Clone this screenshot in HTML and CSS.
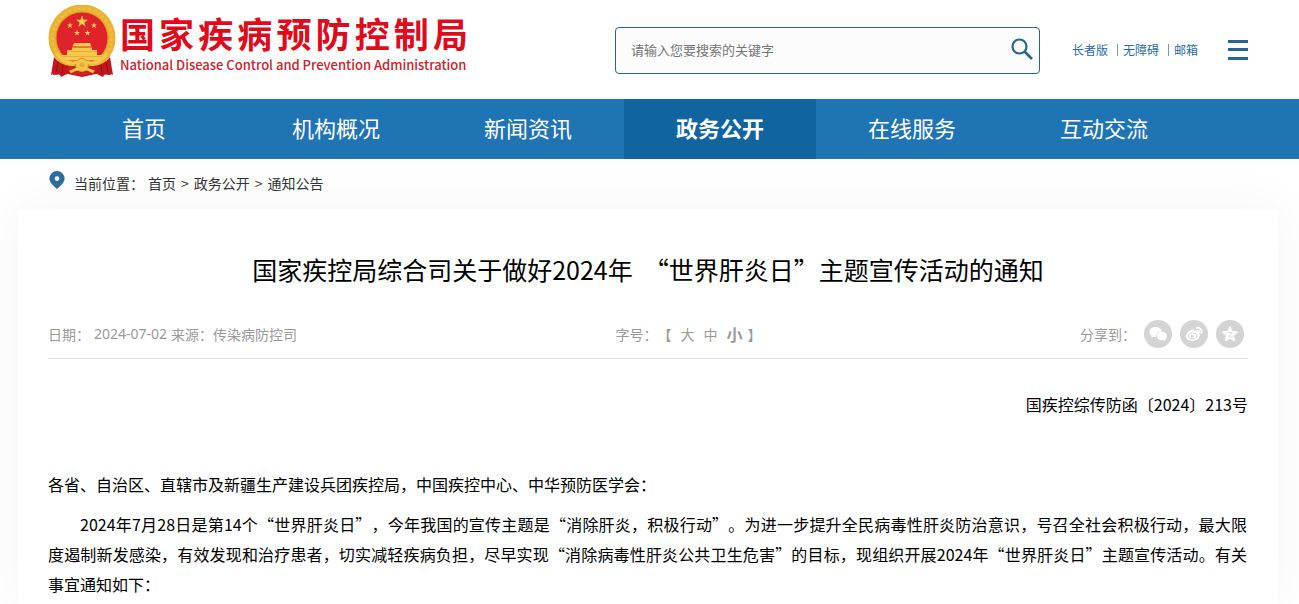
FILE: index.html
```html
<!DOCTYPE html>
<html lang="zh-CN">
<head>
<meta charset="utf-8">
<meta name="viewport" content="width=device-width, initial-scale=1">
<title>国家疾控局综合司关于做好2024年“世界肝炎日”主题宣传活动的通知</title>
<link rel="stylesheet" href="styles.css">
</head>
<body>
<header class="site-header">
  <div class="wrap header-row">
    <a class="brand" href="#">
      <svg class="emblem" viewBox="0 0 68 72" aria-hidden="true">
        <path d="M12 50 L5 70 L20 69 L34 72 L48 69 L63 70 L56 50Z" fill="#c8161d"/>
        <circle cx="34" cy="33" r="33.5" fill="#e9b230"/>
        <circle cx="34" cy="33" r="29.5" fill="none" stroke="#edbc40" stroke-width="3" stroke-dasharray="3 2"/>
        <circle cx="34" cy="33" r="26" fill="#e0222a" stroke="#d79a25" stroke-width="1"/>
        <path d="M34 10.500l1.500 4.200h4.500l-3.600 2.700 1.300 4.300-3.700-2.600-3.700 2.600 1.300-4.300-3.600-2.700h4.500z" fill="#f9cf4d"/>
        <path d="M22 17.500l.8 2h2.200l-1.800 1.300.7 2.200-1.900-1.300-1.900 1.300.7-2.200-1.800-1.300h2.200zM46 17.500l.8 2h2.200l-1.800 1.300.7 2.200-1.900-1.300-1.900 1.300.7-2.200-1.800-1.300h2.200zM29 25l.8 2h2.200l-1.800 1.300.7 2.200-1.900-1.300-1.900 1.300.7-2.200-1.800-1.300h2.200zM39.500 25l.8 2h2.200l-1.800 1.300.7 2.200-1.900-1.300-1.900 1.300.7-2.200-1.800-1.300h2.200z" fill="#f9cf4d"/>
        <path d="M26 38h16l1.500 3.500h-19zM24 42.500h20v2.500h5v5h6.500q-2 3.500-4 5.500h-35q-3-2.500-4-5.500h6.500v-5h5z" fill="#f7c94b"/>
        <path d="M19 46.500h30M13 51.500h42" stroke="#e6ad38" stroke-width="1"/>
        <path d="M6 52 Q12 60 22 61 L21 68 L13 72 L10 67 L3 70Z M62 52 Q56 60 46 61 L47 68 L55 72 L58 67 L65 70Z" fill="#c5161d"/>
        <path d="M10 57l-2 10M15 60l-1 9M58 57l2 10M53 60l1 9" stroke="#8f1118" stroke-width="1"/>
        <path d="M20 66q14 9 28 0l-2-5H22z" fill="#cf2026"/>
        <circle cx="34" cy="60" r="6.500" fill="#f4c647" stroke="#d49225"/>
        <circle cx="34" cy="60" r="2.500" fill="#e6ad38"/>
        <path d="M9 49q10 12 20 8M59 49q-10 12-20 8M22 67q12-7 24 0" fill="none" stroke="#f4c647" stroke-width="3"/>
      </svg>
      <span class="brand-text">
        <span class="brand-cn">国家疾病预防控制局</span>
        <span class="brand-en">National Disease Control and Prevention Administration</span>
      </span>
    </a>
    <form class="search" role="search">
      <input class="search-input" type="text" aria-label="搜索" placeholder="请输入您要搜索的关键字">
      <button class="search-btn" type="button" aria-label="搜索">
        <svg viewBox="0 0 22 22" aria-hidden="true"><circle cx="8.500" cy="8.500" r="7" fill="none" stroke="currentColor" stroke-width="2.200"/><path d="M13.500 13.500L21 21" stroke="currentColor" stroke-width="2.600"/></svg>
      </button>
    </form>
    <nav class="tools" aria-label="辅助">
      <a href="#">长者版</a>
      <a href="#">无障碍</a>
      <a href="#">邮箱</a>
    </nav>
    <button class="menu-btn" type="button" aria-label="菜单"><span></span><span></span><span></span></button>
  </div>
</header>
<nav class="main-nav" aria-label="主导航">
  <div class="wrap nav-row">
    <a href="#">首页</a>
    <a href="#">机构概况</a>
    <a href="#">新闻资讯</a>
    <a class="active" href="#">政务公开</a>
    <a href="#">在线服务</a>
    <a href="#">互动交流</a>
  </div>
</nav>
<div class="wrap crumbs">
  <svg class="pin" viewBox="0 0 16 18" aria-hidden="true"><path fill="#286ca0" fill-rule="evenodd" d="M8 0a7.600 7.600 0 0 1 7.600 7.600c0 4-4 7-7.600 10.400C4.400 14.600.4 11.600.4 7.600A7.600 7.600 0 0 1 8 0zm0 5.200a2.400 2.400 0 1 0 0 4.800 2.400 2.400 0 0 0 0-4.800z"/></svg>
  <span class="crumb-label">当前位置：</span>
  <div class="crumb-path"><a href="#">首页</a><span>&gt;</span><a href="#">政务公开</a><span>&gt;</span><a href="#">通知公告</a></div>
</div>
<div class="page">
<main class="card">
  <h1 class="title">国家疾控局综合司关于做好2024年&nbsp; “世界肝炎日”主题宣传活动的通知</h1>
  <div class="meta">
    <div class="meta-date"><span>日期：</span><span class="date">2024-07-02</span><span>来源：传染病防控司</span></div>
    <div class="meta-size"><span>字号：</span><span>【</span><button type="button">大</button><button type="button">中</button><button class="current" type="button">小</button><span>】</span></div>
    <div class="meta-share">
      <span class="share-label">分享到：</span>
      <a href="#" aria-label="微信"><svg viewBox="0 0 28 28" aria-hidden="true"><circle cx="14" cy="14" r="14" fill="#d4d4d4"/><path fill="#fff" d="M11.500 7C8 7 5.500 9.200 5.500 12c0 1.600.8 2.900 2.100 3.800L7 18l2.500-1.300 2.600.3c-.3-3.400 2.400-5.800 5.900-5.800C17.400 8.700 14.700 7 11.500 7z"/><path fill="#fff" d="M17.800 11.800c-2.900 0-5 1.900-5 4.300s2.100 4.300 5 4.300l1.800-.3 2.100 1.200-.5-1.900c1.100-.8 1.700-1.900 1.700-3.300 0-2.400-2.300-4.300-5.100-4.300z"/></svg></a>
      <a href="#" aria-label="微博"><svg viewBox="0 0 28 28" aria-hidden="true"><circle cx="14" cy="14" r="14" fill="#d4d4d4"/><path fill="#fff" d="M12.500 9.200c1.300-.3 1.900.5 1.500 2 2-.8 4.200-.7 3.900 1.500 1.700.6 2.300 1.600 1.900 3.200-.7 3-4.200 4.900-7.900 4.900-3.500 0-6-1.700-6-4.200 0-3 3.700-6.800 6.600-7.400z"/><ellipse cx="12.500" cy="16" rx="4.200" ry="2.900" fill="none" stroke="#d4d4d4"/><circle cx="12" cy="16.200" r="1.500" fill="#d4d4d4"/><path fill="none" stroke="#fff" stroke-width="1.700" stroke-linecap="round" d="M16.500 7.800c3.300-.8 6 2 4.900 5.300M17 10.500c1.400-.3 2.400.8 2 2"/></svg></a>
      <a href="#" aria-label="QQ空间"><svg viewBox="0 0 28 28" aria-hidden="true"><circle cx="14" cy="14" r="14" fill="#d4d4d4"/><path fill="#fff" stroke="#fff" stroke-linejoin="round" d="M14 6.500l2.200 5 5.300.5-4 3.700 1.200 5.300-4.700-2.700L9.300 21l1.200-5.300-4-3.700 5.300-.5z"/><path fill="none" stroke="#d4d4d4" stroke-width=".8" d="M11.500 12.600h5l-4.500 4q2.500.8 5.300.2"/></svg></a>
    </div>
  </div>
  <article class="article">
    <p class="doc-no">国疾控综传防函〔2024〕213号</p>
    <p class="to">各省、自治区、直辖市及新疆生产建设兵团疾控局，中国疾控中心、中华预防医学会：</p>
    <p class="para">2024年7月28日是第14个“世界肝炎日”，今年我国的宣传主题是“消除肝炎，积极行动”。为进一步提升全民病毒性肝炎防治意识，号召全社会积极行动，最大限度遏制新发感染，有效发现和治疗患者，切实减轻疾病负担，尽早实现“消除病毒性肝炎公共卫生危害”的目标，现组织开展2024年“世界肝炎日”主题宣传活动。有关事宜通知如下：</p>
  </article>
</main>
</div>
</body>
</html>
```
FILE: styles.css
```css
* { box-sizing: border-box; }
body {
  margin: 0;
  background: #fff;
  color: #000;
  font-family: "Noto Sans CJK SC", "Noto Sans", sans-serif;
  font-size: 14px;
  line-height: 20px;
  text-spacing-trim: space-all;
  overflow-x: hidden;
}
a { color: inherit; text-decoration: none; }
button { border: 0; padding: 0; background: none; color: inherit; font: inherit; cursor: pointer; }
svg { display: block; }
.wrap { max-width: 1203px; margin: 0 auto; padding-right: 3px; }

.header-row { display: flex; align-items: center; height: 99px; }
.brand { display: flex; gap: 4px; color: #e00a1c; margin-top: -18px; }
.emblem { width: 68px; height: 72px; }
.brand-text { display: flex; flex-direction: column; width: 348px; padding-top: 5px; }
.brand-cn { font-size: 35px; font-weight: 700; line-height: 46px; text-align: justify; text-align-last: justify; white-space: nowrap; }
.brand-en { font-size: 13px; font-weight: 500; line-height: 18px; color: #d0202b; white-space: nowrap; }
.search {
  display: flex;
  align-items: center;
  width: 425px;
  height: 47px;
  margin: 2px 0 0 auto;
  padding: 0 6px 4px 15px;
  border: 1px solid #286690;
  border-radius: 4px;
  background: #fcfcfc;
}
.search-input { flex: 1; min-width: 0; padding: 3px 0 0; border: 0; outline: 0; background: none; font: inherit; font-size: 13px; }
.search-input::placeholder { color: #757575; opacity: 1; }
.search-btn { width: 22px; height: 22px; color: #286690; }
.tools { display: flex; margin-left: 32px; font-size: 12px; color: #286ca0; }
.tools a + a { display: flex; align-items: center; margin-left: 9px; }
.tools a + a::before { content: ""; width: 1px; height: 12px; margin-right: 5px; background: #6f9cc0; }
.menu-btn { display: flex; flex-direction: column; justify-content: space-between; width: 20px; height: 20px; margin-left: 30px; }
.menu-btn span { width: 100%; height: 3px; background: #286690; }

.main-nav { background: #1f74b4; color: #fff; }
.nav-row { display: grid; grid-template-columns: repeat(6, 16%); }
.nav-row a { padding-bottom: 4px; line-height: 56px; text-align: center; font-size: 22px; }
.nav-row .active { background: #10649f; font-weight: 700; }

.crumbs { display: flex; align-items: flex-start; height: 50px; padding-top: 12px; color: #333; }
.pin { width: 18px; height: 18px; }
.crumb-label { margin: 2px 4px 0 8px; }
.crumb-path { margin-top: 2px; }
.crumb-path span { margin: 0 5px; }

.page { padding-right: 3px; }
.card {
  max-width: 1260px;
  margin: 0 auto;
  padding: 40px 30px 5px;
  background: #fff;
  box-shadow: 0 0 50px rgba(0, 0, 0, .05);
}
.title { margin: 0; font-size: 25px; font-weight: 400; line-height: 40px; text-align: center; }
.meta { display: flex; justify-content: space-between; align-items: center; height: 50px; margin-top: 20px; border-bottom: 1px solid #e0e0e0; color: #999; }
.meta-date { display: flex; gap: 4px; }
.meta-date .date { font-family: "Noto Sans", sans-serif; }
.meta-size { display: flex; align-items: center; }
.meta-size button { margin-left: 9px; }
.meta-size .current { margin-right: 5px; font-size: 16px; font-weight: 700; }
.meta-share { display: flex; justify-content: flex-end; align-items: center; gap: 8px; padding-right: 4px; }
.meta-share svg { width: 28px; height: 28px; }

.article { font-size: 16px; line-height: 30px; }
.article p { margin: 0; }
.article .doc-no { margin-top: 30px; text-align: right; }
.article .to { margin-top: 50px; }
.article .para { margin-top: 10px; padding-right: 1px; text-align: justify; text-indent: 2em; }
```
